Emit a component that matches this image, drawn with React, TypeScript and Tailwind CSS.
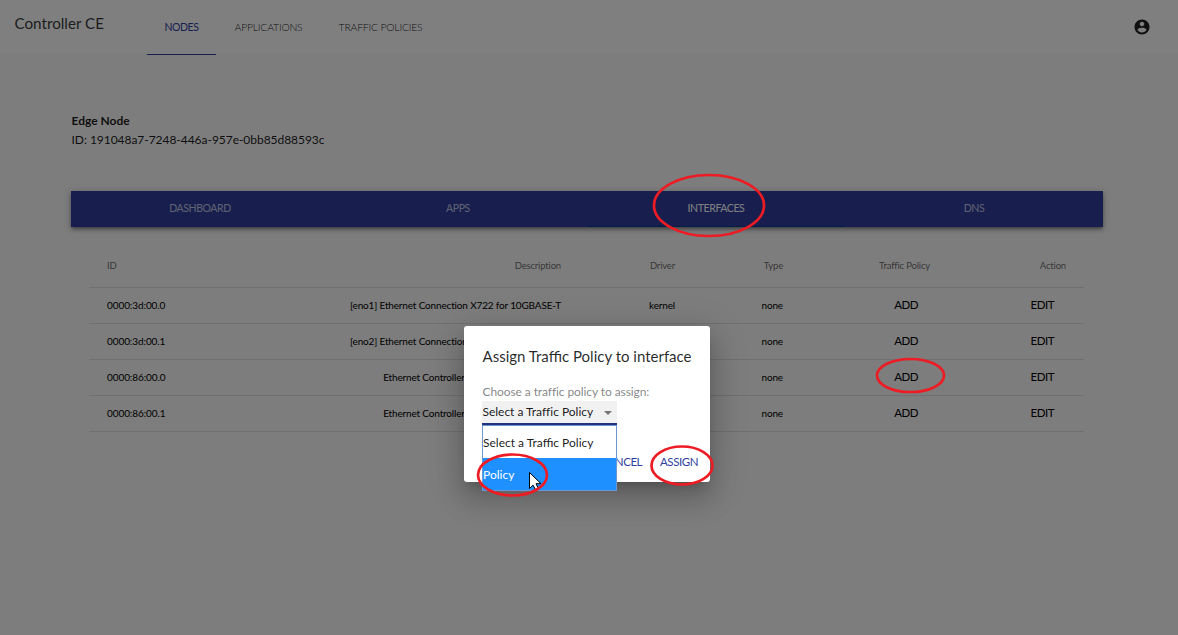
const rows = [
  ['0000:3d:00.0', '[eno1] Ethernet Connection X722 for 10GBASE-T'],
  ['0000:3d:00.1', '[eno2] Ethernet Connection X722 for 10GBASE-T'],
  ['0000:86:00.0', 'Ethernet Controller X710 for 10GbE SFP+'],
  ['0000:86:00.1', 'Ethernet Controller X710 for 10GbE SFP+'],
];

const tableColumns = 'grid grid-cols-[200px_254px_114px_108px_147px_136px] pl-[18px] items-center border-b border-[#e0e0e0]';

function Header() {
  return (
    <header className="flex h-[55px] bg-white border-b border-[#f6f6f6]">
      <div className="w-[147px] pl-[14.5px] pt-[11px] text-[15.2px] leading-[24px] text-black/80 whitespace-nowrap">Controller CE</div>
      <nav className="flex text-[10.5px] leading-[55px] font-light tracking-[-0.25px] text-black/90 whitespace-nowrap">
        <div className="w-[69px] h-[55px] text-center border-b border-[#303f9f] text-[#303f9f] font-normal tracking-[-0.45px]">NODES</div>
        <div className="w-[105px] text-center">APPLICATIONS</div>
        <div className="w-[119px] text-center">TRAFFIC POLICIES</div>
      </nav>
      <svg className="ml-auto mr-[27px] mt-[18px] h-[18px] w-[18px]" viewBox="0 0 24 24" fill="#212121">
        <path d="M12 2C6.48 2 2 6.48 2 12s4.48 10 10 10 10-4.48 10-10S17.52 2 12 2zm0 3c1.66 0 3 1.34 3 3s-1.34 3-3 3-3-1.34-3-3 1.34-3 3-3zm0 14.200c-2.500 0-4.710-1.280-6-3.220.030-1.990 4-3.080 6-3.080 1.990 0 5.970 1.090 6 3.080-1.290 1.940-3.500 3.220-6 3.220z" />
      </svg>
    </header>
  );
}

function Interfaces() {
  return (
    <div className="ml-[89px] w-[995px] pt-[16px] whitespace-nowrap">
      <div className={`${tableColumns} h-[45px] pt-[2px] text-[9.5px] tracking-[-0.17px] text-black/60`}>
        <div>ID</div>
        <div className="text-right">Description</div>
        <div className="text-right">Driver</div>
        <div className="text-right">Type</div>
        <div className="text-right">Traffic Policy</div>
        <div className="text-right">Action</div>
      </div>
      {rows.map(([id, description]) => (
        <div key={id} className={`${tableColumns} h-[36px] text-[10px] tracking-[-0.16px] text-black`}>
          <div className="tracking-[-0.09px]">{id}</div>
          <div className="text-right">{description}</div>
          <div className="text-right">kernel</div>
          <div className="text-right">none</div>
          <div className="pr-[12px] pb-[2px] text-right text-[11.5px] tracking-[-0.5px]">ADD</div>
          <div className="pr-[12px] pb-[2px] text-right text-[11.5px] tracking-[-0.5px]">EDIT</div>
        </div>
      ))}
    </div>
  );
}

function PolicyDialog() {
  return (
    <div className="absolute left-[464px] top-[326px] h-[156px] w-[246px] rounded-[3px] bg-white pl-[18px] pt-[18px] whitespace-nowrap shadow-[0_8px_11px_-5px_rgba(0,0,0,0.2),0_18px_28px_2px_rgba(0,0,0,0.14),0_7px_35px_6px_rgba(0,0,0,0.12)]">
      <h2 className="pl-[0.5px] text-[15px] leading-[25px] text-black/85">Assign Traffic Policy to interface</h2>
      <p className="mt-[14px] pl-[0.5px] text-[12px] leading-[18px] tracking-[-0.09px] text-black/50">Choose a traffic policy to assign:</p>
      <div className="flex h-[24px] w-[135px] items-center border-b-2 border-[#26327c] bg-[#f1f1f1] text-[12px] text-black/90">
        <span className="pl-[0.5px] tracking-[-0.02px]">Select a Traffic Policy</span>
        <svg className="ml-auto mr-[5px] mt-[2px] h-[4px] w-[8px]" viewBox="0 0 10 5" fill="#757575"><path d="M0 0h10L5 5z" /></svg>
      </div>
      <div className="mr-[12px] flex h-[36px] mt-[19px] items-center justify-end gap-[18px] text-[11.500px] tracking-[-0.45px] text-[#303f9f]">
        <span>CANCEL</span>
        <span>ASSIGN</span>
      </div>
      <div className="absolute left-[18px] top-[99px] w-[135px] border border-[#6d96d2] bg-white text-[12px] text-black/90">
        <div className="h-[32px] leading-[34px]">Select a Traffic Policy</div>
        <div className="h-[32px] bg-[#1e90ff] leading-[34px] text-white">Policy</div>
      </div>
    </div>
  );
}

export default function App() {
  return (
    <div className="relative h-[635px] w-[1178px] overflow-hidden bg-[#fafafa] font-['Lato',sans-serif]">
      <Header />
      <section className="pl-[71.5px] pt-[56px] text-[12px] leading-[19px] text-black/90">
        <div className="font-bold">Edge Node</div>
        <div className="tracking-[-0.04px]">ID: 191048a7-7248-446a-957e-0bb85d88593c</div>
      </section>
      <div className="mx-[71px] mt-[42px] grid h-[36px] w-[1032px] grid-cols-4 bg-[#303f9f] text-center text-[10.5px] leading-[35px] tracking-[-0.4px] text-white/70 shadow-[0_2px_3px_-1px_rgba(0,0,0,0.3),0_3px_4px_rgba(0,0,0,0.2),0_1px_8px_rgba(0,0,0,0.2)]">
        <div>DASHBOARD</div>
        <div>APPS</div>
        <div className="border-b border-[#003c90] text-white">INTERFACES</div>
        <div>DNS</div>
      </div>
      <Interfaces />
      <div className="absolute inset-0 bg-black/50" />
      <PolicyDialog />
      <svg className="absolute inset-0 h-[635px] w-[1178px]" viewBox="0 0 1178 635" fill="none" stroke="#ed1c24" strokeWidth="2.700">
        <path d="M529.500 472.500v16l3.600-3.400 2.300 4.400 2.800-1.200-2.200-4.600h5z" fill="white" stroke="black" strokeWidth="1" />
        <ellipse cx="709" cy="205.500" rx="55" ry="30.500" />
        <ellipse cx="910.500" cy="375.500" rx="33.500" ry="16.500" />
        <ellipse cx="682" cy="465.500" rx="30.500" ry="19" />
        <ellipse cx="512.500" cy="475" rx="34.500" ry="20.500" />
      </svg>
    </div>
  );
}
